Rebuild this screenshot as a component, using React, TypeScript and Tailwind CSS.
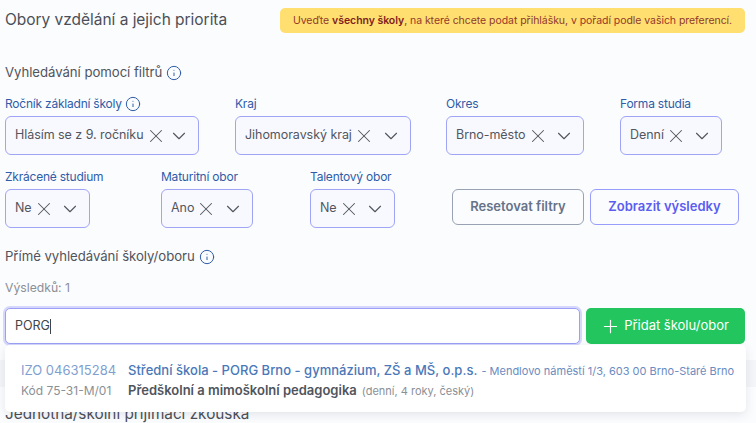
import { ChevronDown, Info, Plus, X } from 'lucide-react';

const font = 'font-["Inter","Liberation_Sans",sans-serif]';

const Filter = ({ label, value, width, gap, info }: { label: string; value: string; width: string; gap: string; info?: boolean }) => (
  <div className={`shrink-0 ${width} ${gap}`}>
    <div className="flex h-[20px] items-center gap-[3px] whitespace-nowrap text-[12px] tracking-[-0.22px] text-[#2f5ca8]">
      {label}
      {info && <Info size={16} strokeWidth={1.5} />}
    </div>
    <div className="mt-[2px] flex h-[39px] items-center rounded-[6px] border border-[#a0a4f5] bg-[#f8f9fe] pl-[9px] text-[#52565e]">
      <span className="whitespace-nowrap text-[12.5px] tracking-[-0.05px]">{value}</span>
      <X size={22} strokeWidth={1.15} className="ml-[1px] shrink-0" />
      <ChevronDown size={22} strokeWidth={1.25} className="ml-auto mr-[8px] shrink-0" />
    </div>
  </div>
);

const App = () => {
  return (
    <div className={`relative h-[423px] w-[756px] overflow-hidden bg-[#fbfcfe] ${font}`}>
      <div className="flex h-[41px] items-start pl-[5px] pt-[8px]">
        <h1 className="h-[25px] w-[275px] shrink-0 text-[15.5px] leading-[24px] tracking-[-0.03px] text-[#4b4f57]">Obory vzdělání a jejich priorita</h1>
        <div className="flex h-[25px] w-[465px] items-center justify-center rounded-[5px] bg-[#ffdf6f] text-[10.5px] tracking-[-0.05px] text-[#8f3a2d]">
          <span>
            Uveďte <b className="font-semibold text-[#7f1d1d]">všechny školy</b>, na které chcete podat přihlášku, v pořadí podle vašich preferencí.
          </span>
        </div>
      </div>

      <div className="mt-[23px] flex h-[18px] items-center gap-[4px] pl-[5px] text-[13.2px] tracking-[-0.05px] text-[#50545c]">
        Vyhledávání pomocí filtrů
        <Info size={16} strokeWidth={1.5} className="text-[#2f5ca8]" />
      </div>

      <div className="mt-[12px] flex pl-[5px]">
        <Filter label="Ročník základní školy" value="Hlásím se z 9. ročníku" width="w-[194px]" gap="mr-[36px]" info />
        <Filter label="Kraj" value="Jihomoravský kraj" width="w-[176px]" gap="mr-[35px]" />
        <Filter label="Okres" value="Brno-město" width="w-[138px]" gap="mr-[36px]" />
        <Filter label="Forma studia" value="Denní" width="w-[102px]" gap="" />
      </div>

      <div className="mt-[12px] flex pl-[5px]">
        <Filter label="Zkrácené studium" value="Ne" width="w-[85px]" gap="mr-[71px]" />
        <Filter label="Maturitní obor" value="Ano" width="w-[92px]" gap="mr-[57px]" />
        <Filter label="Talentový obor" value="Ne" width="w-[85px]" gap="mr-[57px]" />
        <div className="mt-[22px] flex h-[36px] gap-[6px]">
          <button className="w-[132px] rounded-[6px] border border-[#98a2b3] text-[13px] font-semibold text-[#667389]">Resetovat filtry</button>
          <button className="w-[149px] rounded-[6px] border border-[#989cfb] text-[13px] font-semibold text-[#5b5ef0]">Zobrazit výsledky</button>
        </div>
      </div>

      <div className="mt-[20px] flex h-[18px] items-center gap-[4px] pl-[5px] text-[13.2px] tracking-[-0.05px] text-[#50545c]">
        Přímé vyhledávání školy/oboru
        <Info size={16} strokeWidth={1.5} className="text-[#2f5ca8]" />
      </div>
      <div className="mt-[13px] h-[18px] pl-[5px] text-[12.2px] leading-[18px] text-[#8b8f96]">Výsledků: 1</div>

      <div className="mt-[11px] flex pl-[5px]">
        <div className="flex h-[36px] w-[575px] items-center rounded-[5px] border border-[#9d9ff5] bg-white pl-[9px] text-[12.5px] text-[#3f434a] ring-2 ring-[#d5d7fc]">
          PORG<span className="h-[15px] w-px bg-[#3f434a]" />
        </div>
        <button className="ml-[6px] flex h-[36px] w-[159px] items-center justify-center gap-[3px] rounded-[5px] bg-[#22c55e] pr-[2px] text-[13px] text-white">
          <Plus size={21} strokeWidth={1.3} />
          Přidat školu/obor
        </button>
      </div>

      <div className="mt-[16px] h-[27px] bg-[#f3f5f8]" />
      <div className="mt-[17px] whitespace-nowrap pl-[5px] text-[15.3px] leading-[20px] text-[#4b4f57]">Jednotná/školní přijímací zkouška</div>

      <div className="absolute left-[5px] top-[345px] h-[67px] w-[741px] rounded-[5px] bg-white pl-[16px] pt-[16px] shadow-[0_3px_10px_rgba(60,70,90,0.12)]">
        <div className="flex h-[20px] items-center whitespace-nowrap">
          <span className="w-[107px] text-[13px] text-[#7f9fd0]">IZO 046315284</span>
          <span className="text-[13px] font-medium tracking-[0.02px] text-[#4a78b8]">Střední škola - PORG Brno - gymnázium, ZŠ a MŠ, o.p.s.</span>
          <span className="ml-[4px] text-[11px] text-[#6b8bc0]">- Mendlovo náměstí 1/3, 603 00 Brno-Staré Brno</span>
        </div>
        <div className="flex h-[20px] items-center whitespace-nowrap">
          <span className="w-[107px] text-[12px] text-[#8b8f96]">Kód 75-31-M/01</span>
          <span className="text-[13px] font-semibold text-[#50545c]">Předškolní a mimoškolní pedagogika</span>
          <span className="ml-[5px] text-[11px] text-[#8b8f96]">(denní, 4 roky, český)</span>
        </div>
      </div>
    </div>
  );
};

export default App;
